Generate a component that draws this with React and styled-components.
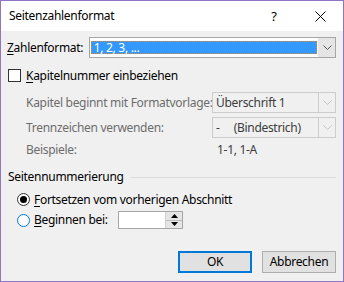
import React from 'react';
import styled, { createGlobalStyle } from 'styled-components';

const Global = createGlobalStyle`
  html, body { margin: 0; padding: 0; background: #ffffff; }
  body { font-family: "Noto Sans", "Open Sans", sans-serif; font-size: 12px; letter-spacing: -0.3px; color: #000; }
  * { box-sizing: border-box; }
`;

const Window = styled.div`
  width: 344px;
  height: 282px;
  border: 1px solid #9274c4;
  background: #f0f0f0;
  display: flex;
  flex-direction: column;
`;

const TitleBar = styled.div`
  height: 30px;
  background: #ffffff;
  display: flex;
  align-items: center;
  padding-left: 8px;
`;

const Title = styled.div`
  flex: 1;
  font-size: 12px;
  line-height: 16px;
`;

const CaptionButton = styled.div`
  width: 46px;
  height: 30px;
  display: flex;
  align-items: center;
  justify-content: center;
  font-size: 13px;
`;

const Body = styled.div`
  flex: 1;
  display: flex;
  flex-direction: column;
  padding: 6px 7px 8px 6px;
`;

const Row = styled.div`
  display: flex;
  align-items: center;
  height: ${p => p.h || 21}px;
  margin-top: ${p => p.mt || 0}px;
  padding-left: ${p => p.pl || 0}px;
`;

const Label = styled.span`
  width: ${p => (p.w ? `${p.w}px` : 'auto')};
  color: ${p => (p.disabled ? '#6d6d6d' : '#000')};
  white-space: nowrap;
  line-height: 16px;
`;

const Key = styled.span`
  text-decoration: underline;
  text-underline-offset: 2px;
`;

const Combo = styled.div`
  width: ${p => p.w}px;
  height: 21px;
  border: 1px solid ${p => (p.disabled ? '#cccccc' : '#a6a6a6')};
  background: ${p => (p.disabled ? '#f0f0f0' : '#ffffff')};
  display: flex;
  align-items: stretch;
  padding: ${p => (p.disabled ? '0' : '1px 0 1px 0')};
`;

const ComboValue = styled.div`
  flex: 1;
  display: flex;
  align-items: center;
  color: #3c3c3c;
  padding-left: 3px;
  white-space: pre;
`;

const Selected = styled.div`
  flex: 1;
  margin: 2px 1px 2px 1px;
  background: #3399ff;
  border: 1px dotted #e08a2c;
  color: #ffffff;
  display: flex;
  align-items: center;
  padding-left: 2px;
  line-height: 12px;
`;

const DropButton = styled.div`
  width: 17px;
  display: flex;
  align-items: center;
  justify-content: center;
  background: ${p => (p.disabled ? '#f0f0f0' : '#e5e5e5')};
  border-left: 1px solid ${p => (p.disabled ? '#cccccc' : 'transparent')};
  margin: ${p => (p.disabled ? '0' : '-1px 0 -1px 0')};
`;

const Chevron = ({ color }) => (
  <svg width="9" height="5" viewBox="0 0 9 5">
    <path d="M0.5 0.5 L4.5 4.5 L8.5 0.5" fill="none" stroke={color} strokeWidth="1" />
  </svg>
);

const CheckBox = styled.div`
  width: 13px;
  height: 13px;
  border: 1px solid #333333;
  background: #ffffff;
  margin-right: 5px;
  margin-left: 1px;
`;

const Group = styled.div`
  display: grid;
  grid-template-columns: 186px 124px;
  grid-auto-rows: auto;
  row-gap: 4px;
  padding-left: 19px;
  margin-top: 10px;
  align-items: center;
`;

const Example = styled.div`
  color: #3c3c3c;
  padding-left: 5px;
  line-height: 16px;
`;

const SectionHead = styled.div`
  display: flex;
  align-items: center;
  margin-top: 11px;
  height: 16px;
  padding-left: 1px;
`;

const Rule = styled.div`
  flex: 1;
  height: 1px;
  background: #dcdcdc;
  margin-left: 6px;
`;

const Radio = styled.div`
  width: 13px;
  height: 13px;
  border-radius: 50%;
  border: 1px solid ${p => (p.focus ? '#0078d7' : '#333333')};
  background: #ffffff;
  display: flex;
  align-items: center;
  justify-content: center;
  margin-left: 10px;
  margin-right: 4px;
  &::after {
    content: '';
    display: ${p => (p.checked ? 'block' : 'none')};
    width: 7px;
    height: 7px;
    border-radius: 50%;
    background: #000;
  }
`;

const Spinner = styled.div`
  width: 65px;
  height: 18px;
  border: 1px solid #a6a6a6;
  background: #ffffff;
  display: flex;
  justify-content: flex-end;
`;

const SpinButtons = styled.div`
  width: 17px;
  display: flex;
  flex-direction: column;
  border-left: 1px solid #cfcfcf;
  background: #e5e5e5;
`;

const SpinHalf = styled.div`
  flex: 1;
  display: flex;
  align-items: center;
  justify-content: center;
  border-top: ${p => (p.bottom ? '1px solid #bdbdbd' : 'none')};
`;

const Triangle = ({ up }) => (
  <svg width="7" height="4" viewBox="0 0 7 4">
    <path d={up ? 'M0 4 L3.5 0 L7 4 Z' : 'M0 0 L3.5 4 L7 0 Z'} fill="#000" />
  </svg>
);

const Footer = styled.div`
  margin-top: auto;
  display: flex;
  justify-content: flex-end;
  gap: 10px;
`;

const Button = styled.div`
  width: 74px;
  height: 22px;
  background: #e1e1e1;
  border: ${p => (p.primary ? '2px solid #0078d7' : '1px solid #adadad')};
  display: flex;
  align-items: center;
  justify-content: center;
  line-height: 16px;
`;

export default function App() {
  return (
    <>
      <Global />
      <Window>
        <TitleBar>
          <Title>Seitenzahlenformat</Title>
          <CaptionButton>?</CaptionButton>
          <CaptionButton>
            <svg width="11" height="11" viewBox="0 0 11 11">
              <path d="M0.5 0.5 L10.5 10.5 M10.5 0.5 L0.5 10.5" stroke="#000" strokeWidth="1" />
            </svg>
          </CaptionButton>
        </TitleBar>
        <Body>
          <Row>
            <Label w={82}><Key>Z</Key>ahlenformat:</Label>
            <Combo w={248}>
              <Selected>1, 2, 3, ...</Selected>
              <DropButton><Chevron color="#555" /></DropButton>
            </Combo>
          </Row>
          <Row h={13} mt={11}>
            <CheckBox />
            <Label><Key>K</Key>apitelnummer einbeziehen</Label>
          </Row>
          <Group>
            <Label disabled>Kapitel beginnt mit Formatvorlage:</Label>
            <Combo w={124} disabled>
              <ComboValue>Überschrift 1</ComboValue>
              <DropButton disabled><Chevron color="#c4c4c4" /></DropButton>
            </Combo>
            <Label disabled>Trennzeichen verwenden:</Label>
            <Combo w={124} disabled>
              <ComboValue>{'-     (Bindestrich)'}</ComboValue>
              <DropButton disabled><Chevron color="#c4c4c4" /></DropButton>
            </Combo>
            <Label disabled>Beispiele:</Label>
            <Example>1-1, 1-A</Example>
          </Group>
          <SectionHead>
            <Label>Seitennummerierung</Label>
            <Rule />
          </SectionHead>
          <Row h={13} mt={8}>
            <Radio checked />
            <Label><Key>F</Key>ortsetzen vom vorherigen Abschnitt</Label>
          </Row>
          <Row h={18} mt={5}>
            <Radio focus />
            <Label w={84}><Key>B</Key>eginnen bei:</Label>
            <Spinner>
              <SpinButtons>
                <SpinHalf><Triangle up /></SpinHalf>
                <SpinHalf bottom><Triangle /></SpinHalf>
              </SpinButtons>
            </Spinner>
          </Row>
          <Footer>
            <Button primary>OK</Button>
            <Button>Abbrechen</Button>
          </Footer>
        </Body>
      </Window>
    </>
  );
}
